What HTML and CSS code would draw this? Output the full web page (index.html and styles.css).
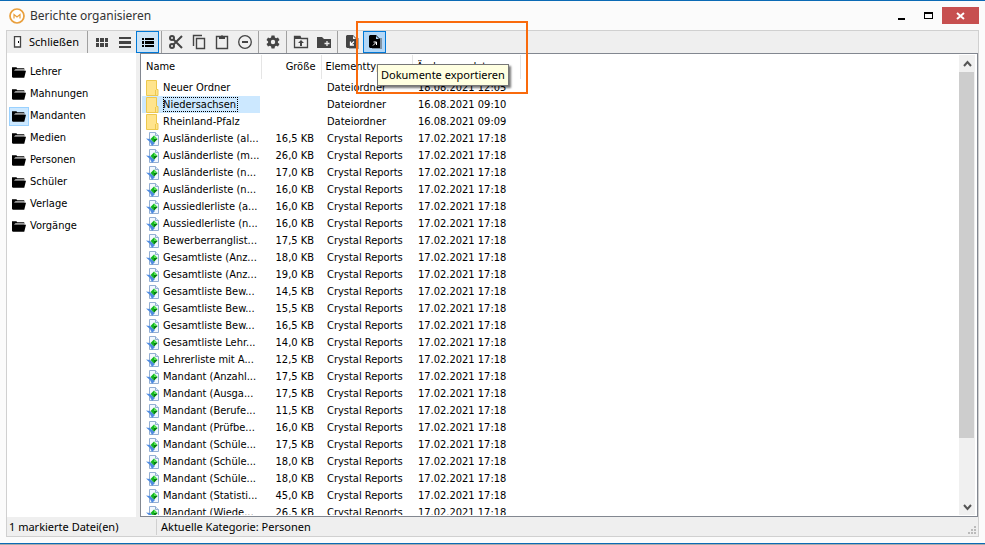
FILE: index.html
```
<!DOCTYPE html>
<html lang="de">
<head>
<meta charset="utf-8">
<title>Berichte organisieren</title>
<link rel="stylesheet" href="styles.css">
</head>
<body>
<svg class="defs" aria-hidden="true">
  <symbol id="folder-open" viewBox="0 0 16 12"><path d="M0 0h5l1 1h8v3H0z" fill="#000"/><path d="M4 2h10v3H2V4z" fill="#999"/><path d="M3 4h13l-2 8H1L0 11V3h2z" fill="#000"/></symbol>
  <symbol id="folder" viewBox="0 0 13 16"><path d="M.5.5h10v9h1.500v6H.5z" fill="#ffe48c" stroke="#edc84e"/><path d="M9.500 10v5.500" stroke="#edc84e"/></symbol>
  <symbol id="report" viewBox="0 0 14 14"><path d="M3.500.5h6l3 3v10h-9z" fill="#f2f8ff" stroke="#93aed2"/><path d="M9.500.5v3h3" fill="#dce9f8" stroke="#93aed2"/><path d="M0 6.500l4 .5 5 4-3 3-2-4z" fill="#4f8be0"/><path d="M8 3.500l3.500 3.500L8 10.500 4.500 7z" fill="#12b51f"/><path d="M8 3.500l3.500 3.500H8z" fill="#54e052"/><path d="M8 7h3.500L8 10.500z" fill="#087b14"/></symbol>
</svg>
<div class="window">
  <header class="titlebar">
    <svg class="logo" viewBox="0 0 16 16"><circle cx="8" cy="8" r="7" fill="#fff" stroke="#e99f3c" stroke-width="1.700"/><path d="M5 10.500v-4l3 2.500 3-2.500v4" fill="none" stroke="#e99f3c" stroke-width="1.200"/></svg>
    <h1>Berichte organisieren</h1>
    <div class="controls">
      <button class="control" aria-label="Minimieren"><svg width="11" height="10"><path d="M2 7h7v2H2z"/></svg></button>
      <button class="control" aria-label="Maximieren"><svg width="11" height="10"><path d="M1 1h9v7H1zM2 3v4h7V3z" fill-rule="evenodd"/></svg></button>
      <button class="control close" aria-label="Fenster schließen"><svg width="11" height="10"><path d="M2 2l7 6M9 2L2 8" stroke="#fff" stroke-width="2"/></svg></button>
    </div>
  </header>
  <main class="frame">
    <div class="toolbar" role="toolbar">
      <button class="exit"><svg width="10" height="12"><path d="M1.500.500h6v10.500h-6z" fill="#fff" stroke="#444" stroke-width="1.300"/><path d="M5 5h1v2H5z"/></svg>Schließen</button>
      <span class="sep"></span>
      <button class="tool" aria-label="Symbole"><svg width="16" height="16"><path d="M2 4h3v4H2zM6 4h4v4H6zM11 4h3v4h-3zM2 9h3v4H2zM6 9h4v4H6zM11 9h3v4h-3z"/></svg></button>
      <button class="tool" aria-label="Liste"><svg width="16" height="16"><path d="M2 3h12v2H2zM2 7h12v3H2zM2 12h12v2H2z"/></svg></button>
      <button class="tool active" aria-label="Details"><svg width="16" height="16"><path d="M2 4h2v2H2zM5 4h9v2H5zM2 7h2v3H2zM5 7h9v3H5zM2 11h2v2H2zM5 11h9v2H5z"/></svg></button>
      <span class="sep"></span>
      <button class="tool" aria-label="Ausschneiden"><svg width="16" height="16"><g fill="none" stroke="#444" stroke-width="2"><circle cx="4" cy="4" r="2"/><circle cx="4" cy="12" r="2"/><path d="M5.500 5.500L14 14M5.500 10.500L14 2"/></g></svg></button>
      <button class="tool" aria-label="Kopieren"><svg width="16" height="16"><g fill="none" stroke="#444" stroke-width="1.400"><path d="M5.500 4.500h8v10h-8z"/><path d="M2.500 12V1.500H11"/></g></svg></button>
      <button class="tool" aria-label="Einfügen"><svg width="16" height="16"><path d="M2.500 2.500h11v12h-11z" fill="none" stroke="#444" stroke-width="1.400"/><path d="M5 2h2l1-1 1 1h2v3H5z"/></svg></button>
      <button class="tool" aria-label="Löschen"><svg width="16" height="16"><circle cx="8" cy="8" r="6.300" fill="none" stroke="#444" stroke-width="1.300"/><path d="M5 7h6v2H5z"/></svg></button>
      <span class="sep"></span>
      <button class="tool" aria-label="Einstellungen"><svg width="16" height="16"><path d="M6.500 1.500h3l.4 2 1.200.7 1.900-.7 1.500 2.600-1.600 1.300v1.300l1.600 1.300-1.500 2.500-1.900-.7-1.200.7-.4 2h-3l-.4-2-1.200-.7-1.900.7L1.500 10l1.600-1.300V7.400L1.500 6.100 3 3.500l1.900.7 1.200-.7zM8 5.800a2.200 2.200 0 1 0 0 4.400 2.200 2.200 0 0 0 0-4.400z" fill-rule="evenodd"/></svg></button>
      <span class="sep"></span>
      <button class="tool" aria-label="Übergeordneter Ordner"><svg width="16" height="16"><path d="M1.500 2.500v11h13v-9H8l-1-2H1.500z" fill="none" stroke="#444" stroke-width="1.300"/><path d="M1 2h6l1 3H1z"/><path d="M8 6l3 3H9v3H7V9H5z"/></svg></button>
      <button class="tool" aria-label="Neuer Ordner"><svg width="16" height="16"><path d="M1 3h5l2 2h7v9H1z"/><path d="M11 7v5M8.500 9.500h5" stroke="#efefef" stroke-width="1.300"/></svg></button>
      <span class="sep"></span>
      <button class="tool" aria-label="Dokumente importieren"><svg width="16" height="16"><path d="M5 4h10v11H5z" fill="#aaa"/><path d="M3 1h6l4 4v9H3l-1-1V2z"/><path d="M9 2v3h3z" fill="#efefef"/><path d="M10 7.500l-3 3M6.500 7.500V11H10" fill="none" stroke="#fff" stroke-width="1.300"/></svg></button>
      <button class="tool active pressed" aria-label="Dokumente exportieren" aria-describedby="tip"><svg width="16" height="16"><path d="M5 4h10v11H5z" fill="#8193a4"/><path d="M3 1h6l4 4v9H3l-1-1V2z"/><path d="M9 2v3h3z" fill="#b3d7f7"/><path d="M6 11.500l3.500-3.500M6.500 8h3v3" fill="none" stroke="#fff" stroke-width="1"/></svg></button>
      <div class="callout"><div class="tooltip" id="tip" role="tooltip">Dokumente exportieren</div></div>
    </div>
    <div class="content">
      <nav class="categories">
        <a href="#"><svg><use href="#folder-open"/></svg>Lehrer</a>
        <a href="#"><svg><use href="#folder-open"/></svg>Mahnungen</a>
        <a href="#" class="current"><svg><use href="#folder-open"/></svg>Mandanten</a>
        <a href="#"><svg><use href="#folder-open"/></svg>Medien</a>
        <a href="#"><svg><use href="#folder-open"/></svg>Personen</a>
        <a href="#"><svg><use href="#folder-open"/></svg>Schüler</a>
        <a href="#"><svg><use href="#folder-open"/></svg>Verlage</a>
        <a href="#"><svg><use href="#folder-open"/></svg>Vorgänge</a>
      </nav>
      <section class="files">
        <div class="list">
          <table>
            <colgroup><col class="c-name"><col class="c-size"><col class="c-type"><col class="c-date"></colgroup>
            <thead><tr><th>Name</th><th class="size">Größe</th><th>Elementtyp</th><th>Änderungsdatum</th></tr></thead>
            <tbody>
              <tr><td><svg class="dir"><use href="#folder"/></svg><span>Neuer Ordner</span></td><td></td><td>Dateiordner</td><td>18.08.2021 12:05</td></tr>
              <tr class="selected"><td><svg class="dir"><use href="#folder"/></svg><span>Niedersachsen</span></td><td></td><td>Dateiordner</td><td>16.08.2021 09:10</td></tr>
              <tr><td><svg class="dir"><use href="#folder"/></svg><span>Rheinland-Pfalz</span></td><td></td><td>Dateiordner</td><td>16.08.2021 09:09</td></tr>
              <tr><td><svg><use href="#report"/></svg><span>Ausländerliste (al...</span></td><td>16,5 KB</td><td>Crystal Reports</td><td>17.02.2021 17:18</td></tr>
              <tr><td><svg><use href="#report"/></svg><span>Ausländerliste (m...</span></td><td>26,0 KB</td><td>Crystal Reports</td><td>17.02.2021 17:18</td></tr>
              <tr><td><svg><use href="#report"/></svg><span>Ausländerliste (n...</span></td><td>17,0 KB</td><td>Crystal Reports</td><td>17.02.2021 17:18</td></tr>
              <tr><td><svg><use href="#report"/></svg><span>Ausländerliste (n...</span></td><td>16,0 KB</td><td>Crystal Reports</td><td>17.02.2021 17:18</td></tr>
              <tr><td><svg><use href="#report"/></svg><span>Aussiedlerliste (a...</span></td><td>16,0 KB</td><td>Crystal Reports</td><td>17.02.2021 17:18</td></tr>
              <tr><td><svg><use href="#report"/></svg><span>Aussiedlerliste (n...</span></td><td>16,0 KB</td><td>Crystal Reports</td><td>17.02.2021 17:18</td></tr>
              <tr><td><svg><use href="#report"/></svg><span>Bewerberranglist...</span></td><td>17,5 KB</td><td>Crystal Reports</td><td>17.02.2021 17:18</td></tr>
              <tr><td><svg><use href="#report"/></svg><span>Gesamtliste (Anz...</span></td><td>18,0 KB</td><td>Crystal Reports</td><td>17.02.2021 17:18</td></tr>
              <tr><td><svg><use href="#report"/></svg><span>Gesamtliste (Anz...</span></td><td>19,0 KB</td><td>Crystal Reports</td><td>17.02.2021 17:18</td></tr>
              <tr><td><svg><use href="#report"/></svg><span>Gesamtliste Bew...</span></td><td>14,5 KB</td><td>Crystal Reports</td><td>17.02.2021 17:18</td></tr>
              <tr><td><svg><use href="#report"/></svg><span>Gesamtliste Bew...</span></td><td>15,5 KB</td><td>Crystal Reports</td><td>17.02.2021 17:18</td></tr>
              <tr><td><svg><use href="#report"/></svg><span>Gesamtliste Bew...</span></td><td>16,5 KB</td><td>Crystal Reports</td><td>17.02.2021 17:18</td></tr>
              <tr><td><svg><use href="#report"/></svg><span>Gesamtliste Lehr...</span></td><td>14,0 KB</td><td>Crystal Reports</td><td>17.02.2021 17:18</td></tr>
              <tr><td><svg><use href="#report"/></svg><span>Lehrerliste mit A...</span></td><td>12,5 KB</td><td>Crystal Reports</td><td>17.02.2021 17:18</td></tr>
              <tr><td><svg><use href="#report"/></svg><span>Mandant (Anzahl...</span></td><td>17,5 KB</td><td>Crystal Reports</td><td>17.02.2021 17:18</td></tr>
              <tr><td><svg><use href="#report"/></svg><span>Mandant (Ausga...</span></td><td>17,5 KB</td><td>Crystal Reports</td><td>17.02.2021 17:18</td></tr>
              <tr><td><svg><use href="#report"/></svg><span>Mandant (Berufe...</span></td><td>11,5 KB</td><td>Crystal Reports</td><td>17.02.2021 17:18</td></tr>
              <tr><td><svg><use href="#report"/></svg><span>Mandant (Prüfbe...</span></td><td>16,0 KB</td><td>Crystal Reports</td><td>17.02.2021 17:18</td></tr>
              <tr><td><svg><use href="#report"/></svg><span>Mandant (Schüle...</span></td><td>17,5 KB</td><td>Crystal Reports</td><td>17.02.2021 17:18</td></tr>
              <tr><td><svg><use href="#report"/></svg><span>Mandant (Schüle...</span></td><td>18,0 KB</td><td>Crystal Reports</td><td>17.02.2021 17:18</td></tr>
              <tr><td><svg><use href="#report"/></svg><span>Mandant (Schüle...</span></td><td>18,0 KB</td><td>Crystal Reports</td><td>17.02.2021 17:18</td></tr>
              <tr><td><svg><use href="#report"/></svg><span>Mandant (Statisti...</span></td><td>45,0 KB</td><td>Crystal Reports</td><td>17.02.2021 17:18</td></tr>
              <tr><td><svg><use href="#report"/></svg><span>Mandant (Wiede...</span></td><td>26,5 KB</td><td>Crystal Reports</td><td>17.02.2021 17:18</td></tr>
            </tbody>
          </table>
        </div>
        <div class="scrollbar">
          <button aria-label="Nach oben"><svg width="9" height="8"><path d="M1 6l3.500-4L8 6" fill="none" stroke="#555" stroke-width="2"/></svg></button>
          <div class="track"><div class="thumb"></div></div>
          <button aria-label="Nach unten"><svg width="9" height="8"><path d="M1 2l3.500 4L8 2" fill="none" stroke="#555" stroke-width="2"/></svg></button>
        </div>
      </section>
    </div>
    <footer class="status">
      <span class="count">1 markierte Datei(en)</span>
      <span class="category">Aktuelle Kategorie: Personen</span>
      <svg class="grip" width="9" height="9"><path d="M6 0h2v2H6zM3 3h2v2H3zM6 3h2v2H6zM0 6h2v2H0zM3 6h2v2H3zM6 6h2v2H6z" fill="#bbb"/></svg>
    </footer>
  </main>
</div>
</body>
</html>
```
FILE: styles.css
```
* { box-sizing: border-box; }
html, body { height: 100%; margin: 0; }
body { background: #aaa; color: #000; font: 11px/16px "Noto Sans", "Open Sans", sans-serif; padding-bottom: 1px; overflow: hidden; }
button { border: 0; padding: 0; margin: 0; background: none; font: inherit; color: inherit; display: flex; align-items: center; justify-content: center; }
svg { display: block; flex: none; }
.defs { position: absolute; width: 0; height: 0; }
.window { height: 100%; display: flex; flex-direction: column; background: #fbfbfb; border: solid #0b6ab5; border-width: 1px 0; padding: 0 6px 6px; }

.titlebar { display: flex; align-items: center; height: 29px; padding: 0 0 0 3px; flex: none; }
.logo { width: 16px; height: 16px; }
h1 { margin: 0 0 0 5px; font-size: 12px; font-weight: 400; color: #333; flex: 1; }
.controls { display: flex; }
.control { width: 27px; height: 17px; }
.control.close { width: 37px; background: #c75050; }

.frame { flex: 1; min-height: 0; display: flex; flex-direction: column; border: 1px solid #d0d0d0; background: #efefef; }
.toolbar { display: flex; height: 22px; flex: none; position: relative; }
.exit { width: 78px; gap: 6px; }
.sep { width: 1px; margin: 0 2px; background: #a0a0a0; }
.tool { width: 23px; height: 22px; fill: #444; }
.tool.active { border: 1px solid #0078d7; background: #cce4f7; fill: #000; }
.tool.pressed { background: #b3d7f7; }
.callout { position: absolute; left: 349px; top: -10px; width: 172px; height: 73px; border: 2px solid #f96a0c; z-index: 1; }
.tooltip { position: absolute; left: 19px; top: 41px; padding: 2px 3px; border: 1px solid #777; background: #ffffe1; box-shadow: 2px 2px 2px #0008; line-height: 16px; white-space: nowrap; }

.content { flex: 1; min-height: 0; display: flex; font-family: "DejaVu Sans Condensed", "DejaVu Sans", sans-serif; }
.categories { width: 129px; margin-right: 4px; padding: 8px 2px; background: #fff; flex: none; }
.categories a { display: flex; align-items: center; height: 22px; color: #000; text-decoration: none; gap: 1px; }
.categories svg { width: 20px; height: 19px; padding: 2px; border: 1px solid transparent; }
.categories .current svg { background: #cce8ff; border-color: #99d1ff; }

.files { flex: 1; min-width: 0; display: flex; border: 1px solid #828790; background: #fff; padding: 1px; }
.list { flex: 1; min-width: 0; overflow: hidden; }
table { border-collapse: collapse; table-layout: fixed; width: 378px; }
.c-name { width: 119px; }
.c-size { width: 60px; }
.c-type { width: 91px; }
.c-date { width: 108px; }
th { height: 24px; padding: 0 5px 0 4px; text-align: left; font-weight: 400; border-right: 1px solid #e5e5e5; white-space: nowrap; }
th.size { text-align: right; }
td { height: 17px; padding: 0 6px; white-space: nowrap; line-height: 15px; }
td:first-child { display: flex; align-items: center; padding: 0 0 0 4px; }
td:nth-child(2) { text-align: right; padding-right: 7px; }
td svg { width: 14px; height: 14px; margin-right: 3px; }
td svg.dir { width: 13px; height: 16px; margin-right: 4px; }
.selected td:first-child { background: linear-gradient(#cce8ff, #cce8ff) 0 0 / calc(100% - 1px) 100% no-repeat; }
.selected span { outline: 1px dotted #000; outline-offset: -1px; padding-right: 2px; }

.scrollbar { width: 17px; display: flex; flex-direction: column; background: #f0f0f0; border-right: 1px solid #fff; flex: none; }
.scrollbar button { height: 17px; }
.track { flex: 1; }
.thumb { height: 86%; background: #cdcdcd; margin-right: 1px; }

.status { display: flex; align-items: center; height: 19px; flex: none; position: relative; }
.count { width: 150px; padding-left: 2px; border-right: 1px solid #d0d0d0; }
.category { padding-left: 4px; flex: 1; }
.grip { align-self: flex-end; margin: 0 1px 1px 0; }
```
